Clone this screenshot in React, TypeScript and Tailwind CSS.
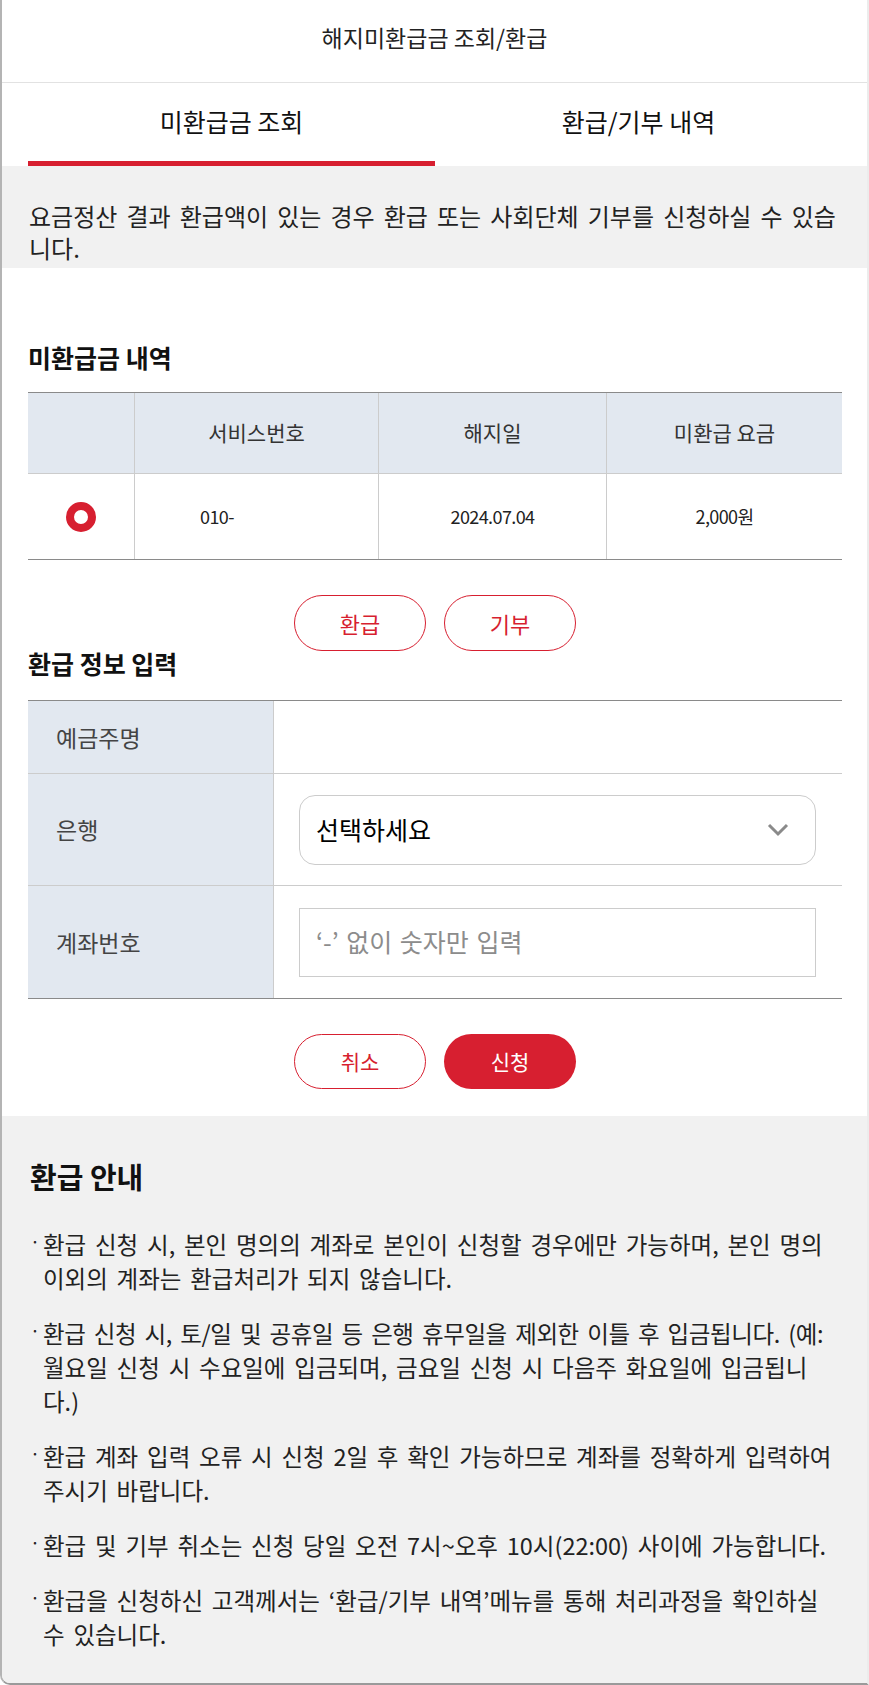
import React from "react";

function Bullet({ lines, tight }: { lines: string[]; tight?: boolean }) {
  return (
    <li className="flex">
      <span className="w-[13px] shrink-0 leading-[28px] text-[18px]">·</span>
      <span className="flex-1 flex flex-col">
        {lines.map((l, i) => (
          <span key={i} className={"block whitespace-nowrap" + (tight && i === 0 ? " tracking-[-0.4px]" : "")}>
            {l}
          </span>
        ))}
      </span>
    </li>
  );
}

export default function App() {
  return (
    <div className="w-[869px] h-[1685px] bg-white font-['Noto_Sans_CJK_KR','Noto_Sans',sans-serif] text-[#222] border-l-2 border-r-2 border-b-2 border-l-[#b4b4b4] border-r-[#ececec] border-b-[#9a9a9a] rounded-bl-[10px] overflow-hidden flex flex-col">
      {/* Title */}
      <div className="h-[83px] shrink-0 border-b border-[#e2e2e2] flex items-center justify-center pb-[7px] text-[23px] text-[#222]">
        해지미환급금 조회/환급
      </div>

      {/* Tabs */}
      <div className="grid grid-cols-2 pl-[26px] pr-[25px] shrink-0">
        <div className="flex flex-col">
          <div className="h-[78px] flex items-center justify-center text-[25px] text-[#111]">미환급금 조회</div>
          <div className="h-[5px] bg-[#d71f30]" />
        </div>
        <div className="flex flex-col">
          <div className="h-[78px] flex items-center justify-center text-[25px] text-[#111]">환급/기부 내역</div>
          <div className="h-[5px]" />
        </div>
      </div>

      {/* Description */}
      <div className="bg-[#f1f1f1] h-[102px] shrink-0 pt-[34px] pl-[27px] pr-[20px] text-[24px] leading-[32px] [word-spacing:3.75px] text-[#222]">
        <span className="block whitespace-nowrap">요금정산 결과 환급액이 있는 경우 환급 또는 사회단체 기부를 신청하실 수 있습</span>
        <span className="block whitespace-nowrap">니다.</span>
      </div>

      {/* Main */}
      <div className="pl-[26px] pr-[25px] shrink-0">
        <h2 className="mt-[74px] text-[25px] leading-[30px] font-bold text-[#111]">미환급금 내역</h2>

        <div className="mt-[20px] border-t border-b border-t-[#8a8a8a] border-b-[#8a8a8a]">
          <div className="grid grid-cols-[106px_244px_228px_1fr] h-[80px] bg-[#e2e8f0] text-[21px] text-[#333]">
            <div />
            <div className="border-l border-[#cccccc] flex items-center justify-center">서비스번호</div>
            <div className="border-l border-[#cccccc] flex items-center justify-center">해지일</div>
            <div className="border-l border-[#cccccc] flex items-center justify-center">미환급 요금</div>
          </div>
          <div className="grid grid-cols-[106px_244px_228px_1fr] h-[86px] border-t border-[#cccccc] text-[18px] text-[#222] tracking-[-0.6px]">
            <div className="flex items-center justify-center">
              <div className="w-[30px] h-[30px] rounded-full border-[8px] border-[#d71f30] bg-white" />
            </div>
            <div className="border-l border-[#cccccc] flex items-center pl-[65px]">010-</div>
            <div className="border-l border-[#cccccc] flex items-center justify-center">2024.07.04</div>
            <div className="border-l border-[#cccccc] flex items-center justify-center">2,000원</div>
          </div>
        </div>

        <div className="mt-[35px] flex justify-center gap-[18px]">
          <button className="w-[132px] h-[56px] rounded-full border border-[#d71f30] text-[#d71f30] text-[22px] bg-white">환급</button>
          <button className="w-[132px] h-[56px] rounded-full border border-[#d71f30] text-[#d71f30] text-[22px] bg-white">기부</button>
        </div>

        <h2 className="text-[25px] leading-[24px] font-bold text-[#111]">환급 정보 입력</h2>

        <div className="mt-[25px] border-t border-b border-t-[#8a8a8a] border-b-[#8a8a8a] text-[23px]">
          <div className="grid grid-cols-[245px_1fr] h-[72px]">
            <div className="bg-[#e2e8f0] flex items-center pl-[28px] text-[#444]">예금주명</div>
            <div className="border-l border-[#cccccc]" />
          </div>
          <div className="grid grid-cols-[245px_1fr] h-[112px] border-t border-[#cccccc]">
            <div className="bg-[#e2e8f0] flex items-center pl-[28px] text-[#444]">은행</div>
            <div className="border-l border-[#cccccc] flex items-center pl-[25px] pr-[26px]">
              <div className="w-full h-[70px] rounded-[16px] border border-[#cccccc] flex items-center justify-between pl-[16px] pr-[26px]">
                <span className="text-[25px] text-black">선택하세요</span>
                <svg width="22" height="14" viewBox="0 0 22 14" fill="none">
                  <polyline points="2,2 11,11 20,2" stroke="#8a8a8a" strokeWidth="3" fill="none" />
                </svg>
              </div>
            </div>
          </div>
          <div className="grid grid-cols-[245px_1fr] h-[113px] border-t border-[#cccccc]">
            <div className="bg-[#e2e8f0] flex items-center pl-[28px] text-[#444]">계좌번호</div>
            <div className="border-l border-[#cccccc] flex items-center pl-[25px] pr-[26px]">
              <div className="w-full h-[69px] border border-[#cccccc] flex items-center pl-[16px]">
                <span className="text-[25px] text-[#8c8c8c] [word-spacing:2px]">‘-’ 없이 숫자만 입력</span>
              </div>
            </div>
          </div>
        </div>

        <div className="mt-[35px] mb-[27px] flex justify-center gap-[18px]">
          <button className="w-[132px] h-[55px] rounded-full border border-[#d71f30] text-[#d71f30] text-[21px] bg-white">취소</button>
          <button className="w-[132px] h-[55px] rounded-full bg-[#d71f30] text-white text-[21px]">신청</button>
        </div>
      </div>

      {/* Guide */}
      <div className="flex-1 bg-[#f1f1f1] pt-[42px] pl-[28px] pr-[10px]">
        <h2 className="text-[29px] leading-[36px] font-bold text-[#111]">환급 안내</h2>
        <ul className="mt-[33px] flex flex-col gap-[21px] text-[23.5px] leading-[34px] [word-spacing:3.5px] text-[#222]">
          <Bullet lines={["환급 신청 시, 본인 명의의 계좌로 본인이 신청할 경우에만 가능하며, 본인 명의", "이외의 계좌는 환급처리가 되지 않습니다."]} />
          <Bullet tight lines={["환급 신청 시, 토/일 및 공휴일 등 은행 휴무일을 제외한 이틀 후 입금됩니다. (예:", "월요일 신청 시 수요일에 입금되며, 금요일 신청 시 다음주 화요일에 입금됩니", "다.)"]} />
          <Bullet lines={["환급 계좌 입력 오류 시 신청 2일 후 확인 가능하므로 계좌를 정확하게 입력하여", "주시기 바랍니다."]} />
          <Bullet lines={["환급 및 기부 취소는 신청 당일 오전 7시~오후 10시(22:00) 사이에 가능합니다."]} />
          <Bullet lines={["환급을 신청하신 고객께서는 ‘환급/기부 내역’메뉴를 통해 처리과정을 확인하실", "수 있습니다."]} />
        </ul>
      </div>
    </div>
  );
}
